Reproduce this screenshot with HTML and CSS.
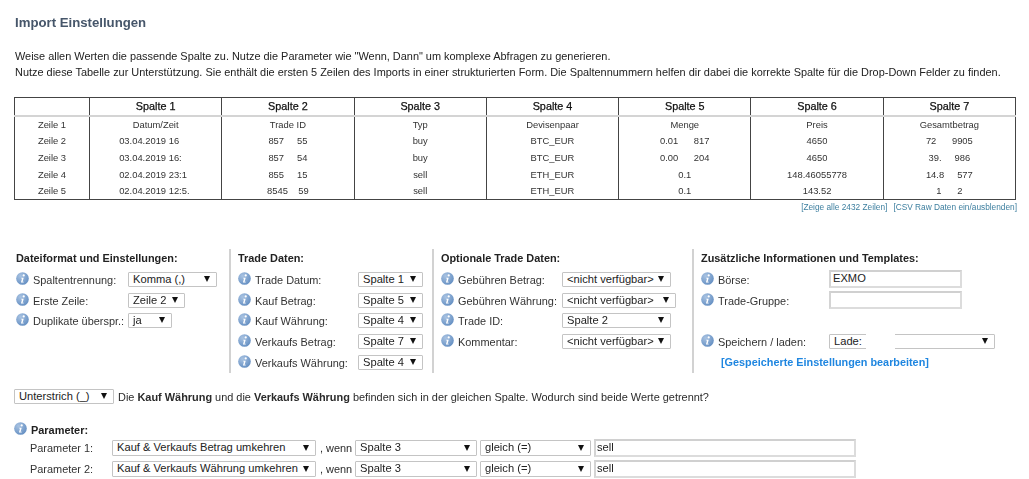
FILE: index.html
```html
<!DOCTYPE html>
<html lang="de">
<head>
<meta charset="utf-8">
<title>Import Einstellungen</title>
<link rel="stylesheet" href="styles.css">
</head>
<body>
<svg class="defs" width="0" height="0" aria-hidden="true">
  <defs>
    <radialGradient id="ball" cx="35%" cy="30%" r="80%">
      <stop offset="0" stop-color="#a9c3e2"/>
      <stop offset="1" stop-color="#5f8bc0"/>
    </radialGradient>
    <symbol id="info" viewBox="0 0 14 14">
      <circle cx="7" cy="7" r="6.8" fill="url(#ball)"/>
      <circle cx="8.3" cy="3.7" r="1.2" fill="#fff"/>
      <path d="M5.6 6.1h2.7l-1.2 4.4h1.3l-.2.9H5.3l1.2-4.4H5.4z" fill="#fff"/>
    </symbol>
  </defs>
</svg>
<main class="page">
  <h1 class="title">Import Einstellungen</h1>
  <p class="intro">Weise allen Werten die passende Spalte zu. Nutze die Parameter wie "Wenn, Dann" um komplexe Abfragen zu generieren.<br>Nutze diese Tabelle zur Unterstützung. Sie enthält die ersten 5 Zeilen des Imports in einer strukturierten Form. Die Spaltennummern helfen dir dabei die korrekte Spalte für die Drop-Down Felder zu finden.</p>

  <table class="preview">
    <thead>
      <tr><th class="corner"></th><th>Spalte 1</th><th>Spalte 2</th><th>Spalte 3</th><th>Spalte 4</th><th>Spalte 5</th><th>Spalte 6</th><th>Spalte 7</th></tr>
    </thead>
    <tbody>
      <tr><td>Zeile 1</td><td>Datum/Zeit</td><td>Trade ID</td><td>Typ</td><td>Devisenpaar</td><td>Menge</td><td>Preis</td><td>Gesamtbetrag</td></tr>
      <tr><td>Zeile 2</td><td>03.04.2019 16&nbsp;&nbsp;&nbsp;&nbsp;&nbsp;</td><td>857&nbsp;&nbsp;&nbsp;&nbsp;&nbsp;55</td><td>buy</td><td>BTC_EUR</td><td>0.01&nbsp;&nbsp;&nbsp;&nbsp;&nbsp;&nbsp;817</td><td>4650</td><td>72&nbsp;&nbsp;&nbsp;&nbsp;&nbsp;&nbsp;9905</td></tr>
      <tr><td>Zeile 3</td><td>03.04.2019 16:&nbsp;&nbsp;&nbsp;&nbsp;</td><td>857&nbsp;&nbsp;&nbsp;&nbsp;&nbsp;54</td><td>buy</td><td>BTC_EUR</td><td>0.00&nbsp;&nbsp;&nbsp;&nbsp;&nbsp;&nbsp;204</td><td>4650</td><td>39.&nbsp;&nbsp;&nbsp;&nbsp;&nbsp;986</td></tr>
      <tr><td>Zeile 4</td><td>02.04.2019 23:1&nbsp;&nbsp;</td><td>855&nbsp;&nbsp;&nbsp;&nbsp;&nbsp;15</td><td>sell</td><td>ETH_EUR</td><td>0.1</td><td>148.46055778</td><td>14.8&nbsp;&nbsp;&nbsp;&nbsp;&nbsp;577</td></tr>
      <tr><td>Zeile 5</td><td>02.04.2019 12:5.&nbsp;</td><td>8545&nbsp;&nbsp;&nbsp;&nbsp;59</td><td>sell</td><td>ETH_EUR</td><td>0.1</td><td>143.52</td><td>1&nbsp;&nbsp;&nbsp;&nbsp;&nbsp;&nbsp;2</td></tr>
    </tbody>
  </table>
  <p class="tools"><a href="#">[Zeige alle 2432 Zeilen]</a><a href="#">[CSV Raw Daten ein/ausblenden]</a></p>

  <section class="cols">
    <div class="col c1">
      <h2>Dateiformat und Einstellungen:</h2>
      <div class="row"><svg class="ico"><use href="#info"/></svg><span class="lbl">Spaltentrennung:</span><div class="sel w89">Komma (,)</div></div>
      <div class="row"><svg class="ico"><use href="#info"/></svg><span class="lbl">Erste Zeile:</span><div class="sel w57">Zeile 2</div></div>
      <div class="row"><svg class="ico"><use href="#info"/></svg><span class="lbl">Duplikate überspr.:</span><div class="sel w44">ja</div></div>
    </div>
    <div class="col c2">
      <h2>Trade Daten:</h2>
      <div class="row"><svg class="ico"><use href="#info"/></svg><span class="lbl">Trade Datum:</span><div class="sel w64">Spalte 1</div></div>
      <div class="row"><svg class="ico"><use href="#info"/></svg><span class="lbl">Kauf Betrag:</span><div class="sel w64">Spalte 5</div></div>
      <div class="row"><svg class="ico"><use href="#info"/></svg><span class="lbl">Kauf Währung:</span><div class="sel w64">Spalte 4</div></div>
      <div class="row"><svg class="ico"><use href="#info"/></svg><span class="lbl">Verkaufs Betrag:</span><div class="sel w64">Spalte 7</div></div>
      <div class="row"><svg class="ico"><use href="#info"/></svg><span class="lbl">Verkaufs Währung:</span><div class="sel w64">Spalte 4</div></div>
    </div>
    <div class="col c3">
      <h2>Optionale Trade Daten:</h2>
      <div class="row"><svg class="ico"><use href="#info"/></svg><span class="lbl">Gebühren Betrag:</span><div class="sel w109">&lt;nicht verfügbar&gt;</div></div>
      <div class="row"><svg class="ico"><use href="#info"/></svg><span class="lbl">Gebühren Währung:</span><div class="sel w114">&lt;nicht verfügbar&gt;</div></div>
      <div class="row"><svg class="ico"><use href="#info"/></svg><span class="lbl">Trade ID:</span><div class="sel w109">Spalte 2</div></div>
      <div class="row"><svg class="ico"><use href="#info"/></svg><span class="lbl">Kommentar:</span><div class="sel w109">&lt;nicht verfügbar&gt;</div></div>
    </div>
    <div class="col c4">
      <h2>Zusätzliche Informationen und Templates:</h2>
      <div class="row"><svg class="ico"><use href="#info"/></svg><span class="lbl">Börse:</span><div class="inp w133">EXMO</div></div>
      <div class="row"><svg class="ico"><use href="#info"/></svg><span class="lbl">Trade-Gruppe:</span><div class="inp w133"></div></div>
      <div class="row"></div>
      <div class="row"><svg class="ico"><use href="#info"/></svg><span class="lbl">Speichern / laden:</span><div class="sel w166">Lade:<span class="mask"></span></div></div>
      <a class="edit" href="#">[Gespeicherte Einstellungen bearbeiten]</a>
    </div>
  </section>

  <div class="split">
    <div class="sel w100">Unterstrich (_)</div>
    <span>Die <b>Kauf Währung</b> und die <b>Verkaufs Währung</b> befinden sich in der gleichen Spalte. Wodurch sind beide Werte getrennt?</span>
  </div>

  <div class="param-head"><svg class="ico"><use href="#info"/></svg><b>Parameter:</b></div>
  <div class="param">
    <span class="plabel">Parameter 1:</span>
    <div class="sel w204">Kauf &amp; Verkaufs Betrag umkehren</div>
    <span class="wenn">, wenn</span>
    <div class="sel w122">Spalte 3</div>
    <div class="sel w111">gleich (=)</div>
    <div class="inp w262">sell</div>
  </div>
  <div class="param">
    <span class="plabel">Parameter 2:</span>
    <div class="sel w204">Kauf &amp; Verkaufs Währung umkehren</div>
    <span class="wenn">, wenn</span>
    <div class="sel w122">Spalte 3</div>
    <div class="sel w111">gleich (=)</div>
    <div class="inp w262">sell</div>
  </div>
</main>
</body>
</html>
```
FILE: styles.css
```css
* { box-sizing: border-box; }
html, body { margin: 0; padding: 0; }
body {
  width: 1029px;
  height: 479px;
  overflow: hidden;
  background: #fff;
  color: #2b2b2b;
  font-family: "Liberation Sans", Arial, sans-serif;
  font-size: 10.93px;
}
.defs { position: absolute; }
.page { padding: 0 13px 0 14px; filter: blur(0.3px); }

.title {
  margin: 0;
  padding-top: 15px;
  height: 48px;
  font-size: 13.2px;
  line-height: 16px;
  font-weight: bold;
  color: #46566a;
  padding-left: 1px;
}
.intro {
  margin: 0;
  height: 49px;
  padding-left: 1px;
  line-height: 16px;
  font-size: 10.93px;
  color: #222;
}

.preview {
  width: 1002px;
  height: 103px;
  border-collapse: collapse;
  table-layout: fixed;
  border: 1px solid #444;
  font-size: 9.4px;
  text-align: center;
}
.preview th {
  height: 18px;
  padding: 0;
  font-size: 10.8px;
  font-weight: normal;
  color: #111;
  border-left: 1px solid #444;
  border-bottom: 2px solid #d4d4d4;
  -webkit-text-stroke: 0.25px #111;
}
.preview .corner { width: 75px; border-left: 0; }
.preview td {
  padding: 0;
  height: 16.7px;
  border-left: 1px solid #444;
  white-space: nowrap;
  color: #333;
}
.preview td:first-child { border-left: 0; }

.tools {
  margin: 0 -1px 0 0;
  height: 49px;
  padding-top: 2px;
  display: flex;
  justify-content: flex-end;
  gap: 6px;
  font-size: 8.3px;
  line-height: 10px;
}
.tools a { color: #3d7f9f; text-decoration: none; }

.cols { display: flex; height: 124px; }
.col { height: 124px; }
.col h2 {
  margin: 0;
  height: 22px;
  padding-top: 2px;
  font-size: 10.9px;
  line-height: 14px;
  font-weight: bold;
  color: #222;
}
.c1 { width: 215px; padding-left: 2px; }
.c2, .c3, .c4 { border-left: 2px solid #d2d2d2; padding-left: 7px; }
.c2 { width: 203px; }
.c3 { width: 260px; }
.c4 { flex: 1; }
.c1 .lbl { width: 95px; }
.c2 .lbl { width: 103px; }
.c3 .lbl { width: 104px; }
.c4 .lbl { width: 111px; }

.row { display: flex; align-items: flex-start; height: 20.7px; }
.ico { width: 13px; height: 13px; flex: none; margin-right: 4px; margin-top: 1px; }
.lbl { flex: none; padding-top: 2px; line-height: 14px; white-space: nowrap; color: #333; }

.sel, .inp {
  flex: none;
  position: relative;
  background: #fff;
  white-space: nowrap;
  color: #222;
  font-size: 11.15px;
}
.sel {
  height: 15px;
  line-height: 12px;
  padding-left: 4px;
  border: 1px solid #c4c4c4;
  border-radius: 1px;
  margin-top: 1px;
}
.sel::after {
  content: "";
  position: absolute;
  right: 6px;
  top: 3px;
  border-left: 3.5px solid transparent;
  border-right: 3.5px solid transparent;
  border-top: 6px solid #111;
}
.inp {
  height: 18px;
  line-height: 13px;
  padding-left: 2px;
  border: 2px solid #dcdcdc;
  border-top-color: #d0d0d0;
  border-left-color: #d4d4d4;
  margin-top: -1px;
}
.mask {
  position: absolute;
  left: 36px;
  top: -1px;
  width: 29px;
  height: 15px;
  background: #fff;
}
.w44 { width: 44px; }
.w57 { width: 57px; }
.w64 { width: 65px; }
.w89 { width: 89px; }
.w100 { width: 100px; }
.w109 { width: 109px; }
.w111 { width: 111px; }
.w114 { width: 114px; }
.w122 { width: 122px; }
.w133 { width: 133px; }
.w166 { width: 166px; }
.w204 { width: 204px; }
.w262 { width: 262px; }

.edit {
  display: block;
  margin-left: 20px;
  padding-top: 1px;
  font-size: 10.85px;
  font-weight: bold;
  line-height: 14px;
  color: #1f86e0;
  text-decoration: none;
}

.split {
  display: flex;
  align-items: center;
  gap: 4px;
  height: 15px;
  margin-top: 16px;
}
.split .sel { margin-top: 0; }
.param-head {
  display: flex;
  align-items: flex-start;
  margin-top: 18px;
  height: 16px;
}
.param-head .ico { margin-top: 0; margin-right: 4px; }
.param-head b { padding-top: 1px; line-height: 14px; color: #222; }
.param {
  display: flex;
  align-items: center;
  height: 20.5px;
  padding-left: 16px;
}
.param .sel { height: 16px; line-height: 13px; margin-top: 0; }
.param .sel::after { top: 4px; }
.plabel { width: 82px; flex: none; color: #333; }
.wenn { width: 39px; flex: none; padding-left: 4px; }
.param .sel + .sel { margin-left: 3px; }
.param .inp { margin-left: 3px; margin-top: 0; padding-left: 1px; }
```
